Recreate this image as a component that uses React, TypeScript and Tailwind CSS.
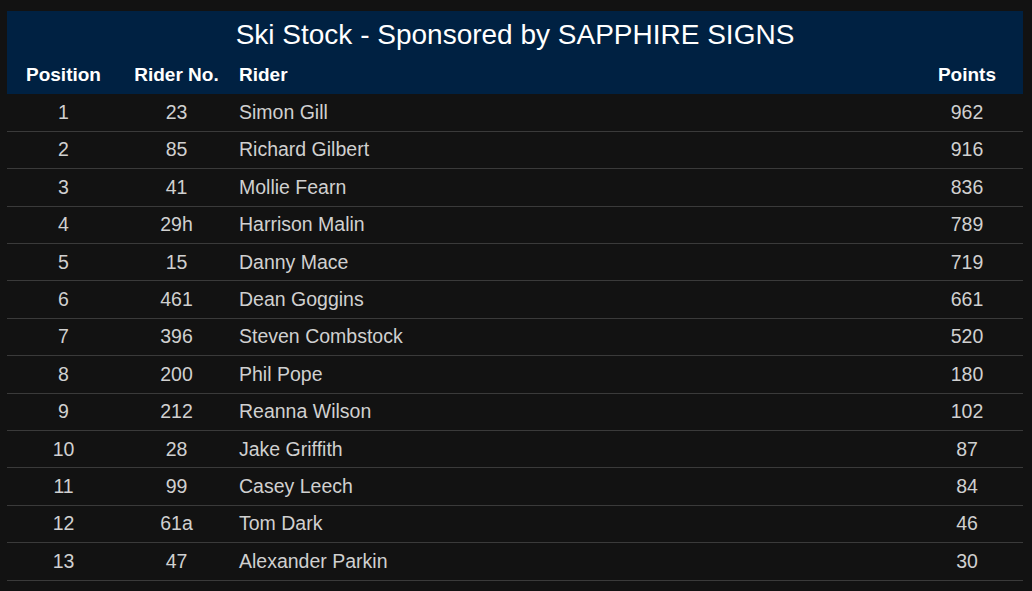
import React from 'react';

const rows = [
  { pos: 1, no: '23', name: 'Simon Gill', points: 962 },
  { pos: 2, no: '85', name: 'Richard Gilbert', points: 916 },
  { pos: 3, no: '41', name: 'Mollie Fearn', points: 836 },
  { pos: 4, no: '29h', name: 'Harrison Malin', points: 789 },
  { pos: 5, no: '15', name: 'Danny Mace', points: 719 },
  { pos: 6, no: '461', name: 'Dean Goggins', points: 661 },
  { pos: 7, no: '396', name: 'Steven Combstock', points: 520 },
  { pos: 8, no: '200', name: 'Phil Pope', points: 180 },
  { pos: 9, no: '212', name: 'Reanna Wilson', points: 102 },
  { pos: 10, no: '28', name: 'Jake Griffith', points: 87 },
  { pos: 11, no: '99', name: 'Casey Leech', points: 84 },
  { pos: 12, no: '61a', name: 'Tom Dark', points: 46 },
  { pos: 13, no: '47', name: 'Alexander Parkin', points: 30 },
];

export default function App() {
  return (
    <div className="min-h-[591px] bg-[#121212] pl-[7px] pr-[9px] pt-[11px] font-['Liberation_Sans',Arial,sans-serif]">
      <table className="w-full border-collapse table-fixed">
        <colgroup>
          <col className="w-[113px]" />
          <col className="w-[113px]" />
          <col />
          <col className="w-[112px]" />
        </colgroup>
        <thead className="bg-[#002142] text-white">
          <tr>
            <th colSpan={4} className="h-[46px] pt-[2px] text-center text-[28px] font-normal leading-none">
              Ski Stock - Sponsored by SAPPHIRE SIGNS
            </th>
          </tr>
          <tr className="h-[37px] text-[19px] font-bold">
            <th className="text-center">Position</th>
            <th className="text-center">Rider No.</th>
            <th className="text-left pl-[6px]">Rider</th>
            <th className="text-center">Points</th>
          </tr>
        </thead>
        <tbody className="text-[19.5px] text-[#d0d0d0]">
          {rows.map((r) => (
            <tr key={r.pos} className="h-[37.4px] border-b border-[#3a3a3a]">
              <td className="text-center">{r.pos}</td>
              <td className="text-center">{r.no}</td>
              <td className="text-left pl-[6px]">{r.name}</td>
              <td className="text-center">{r.points}</td>
            </tr>
          ))}
        </tbody>
      </table>
    </div>
  );
}
